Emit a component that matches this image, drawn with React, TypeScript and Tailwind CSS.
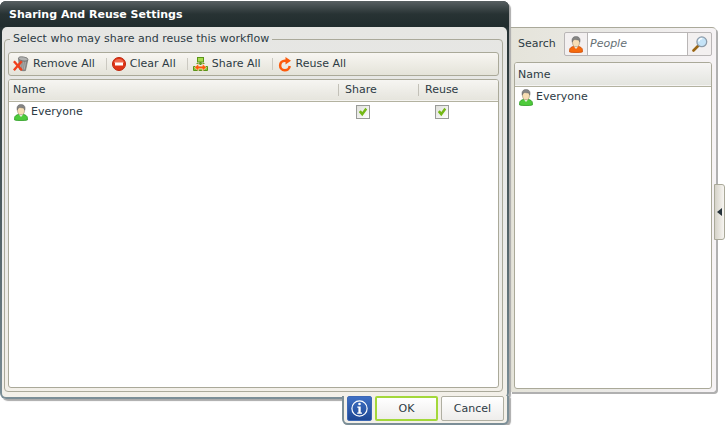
import type { ReactNode } from "react";

type Permission = {
  name: string;
  share: boolean;
  reuse: boolean;
};

const permissions: Permission[] = [
  { name: "Everyone", share: true, reuse: true },
];

const people = ["Everyone"];

function PersonIcon({ color, edge }: { color: string; edge: string }) {
  return (
    <svg width="14" height="17" viewBox="0 0 14 17" className="shrink-0">
      <path
        d="M.6 16V13.6C.8 11.800 2.400 11 5 10.200h4c2.600.8 4.200 1.600 4.400 3.400V16c-2 .7-10.800.7-12.800 0Z"
        fill={color}
        stroke={edge}
        strokeWidth=".8"
      />
      <path d="M4.600 10 7 13l2.400-3Z" fill="#f4f4ee" />
      <ellipse cx="7" cy="6.200" rx="3.500" ry="4.600" fill="#f7deb4" stroke="#9a8a6a" strokeWidth=".6" />
      <path
        d="M3.200 6.200C2.400 2.500 4 .6 7 .6s4.800 1.900 3.800 5.600c-.3-1.200-.8-2-1.600-2.300-1.800.1-3.500-1-5 .3-.4.700-.7 1.200-1 2Z"
        fill="#858585"
        stroke="#666"
        strokeWidth=".5"
      />
    </svg>
  );
}

function TrashIcon() {
  return (
    <svg width="16" height="16" viewBox="0 0 16 16" className="shrink-0">
      <path d="M5.500 2.500 14.800 4 12.500 14.500c-2 .6-4.500 0-6-1Z" fill="#8a8a88" stroke="#666" strokeWidth=".6" />
      <path d="m8 5-.3 8.500M10.300 5.500l-.7 8.500M12.500 5.500l-1.300 8" stroke="#b8b8b6" strokeWidth=".8" />
      <ellipse cx="10.200" cy="2.900" rx="4.800" ry="2" transform="rotate(8 10.200 2.900)" fill="#b2b2b0" stroke="#686868" strokeWidth=".7" />
      <path d="m.9 5.200 8 9M8.700 5.200.9 14.200" stroke="#f0401c" strokeWidth="2.400" />
    </svg>
  );
}

function ClearIcon() {
  return (
    <svg width="14" height="14" viewBox="0 0 14 14" className="shrink-0">
      <circle cx="7" cy="7" r="6.500" fill="#df3417" stroke="#bd260d" />
      <path d="M1.800 6a5.300 5 0 0 1 10.400 0Z" fill="#f06a4e" />
      <rect x="3" y="5.500" width="8" height="3" fill="#fff" />
    </svg>
  );
}

function ShareIcon() {
  return (
    <svg width="15" height="14" viewBox="0 0 15 14" className="shrink-0">
      <path d="M7.500 5v3" stroke="#5b8f16" strokeWidth="2" />
      <rect x="4.500" y=".5" width="6" height="4.500" fill="#a6dc4e" stroke="#5b9418" />
      <path d="M3.500 6.500h8" stroke="#6ca327" />
      <path d="M.5 9.500h14v4H.5Z" fill="#8bc932" stroke="#5b9418" />
      <path
        d="m1.600 10.500 4-3.800v2.500h3.800V6.700l4 3.800-4 3.500v-2.300H5.600V14Z"
        fill="#ff5a0a"
        stroke="#fbe9d6"
        strokeWidth=".6"
      />
    </svg>
  );
}

function ReuseIcon() {
  return (
    <svg width="14" height="15" viewBox="0 0 14 15" className="shrink-0">
      <path d="M8.500 3.700H7A4.800 4.800 0 1 0 11.700 9" fill="none" stroke="#fc5b0c" strokeWidth="2.500" />
      <path d="M7.500 0 13 3.800 7.500 7.600Z" fill="#fc5b0c" />
    </svg>
  );
}

function SearchIcon() {
  return (
    <svg width="16" height="16" viewBox="0 0 16 16">
      <path d="m6.500 9.500-5 5" stroke="#9a6512" strokeWidth="2.600" strokeLinecap="round" />
      <circle cx="9.800" cy="5.800" r="4.900" fill="#c5e3f7" stroke="#8e9caa" strokeWidth="1.300" />
      <path d="M6.800 5.500c.2-2 1.600-3 3.500-2.900" fill="none" stroke="#fff" strokeWidth="1.400" />
    </svg>
  );
}

function InfoIcon() {
  return (
    <svg width="17" height="17" viewBox="0 0 17 17">
      <circle cx="8.500" cy="8.500" r="7.600" fill="none" stroke="#fff" strokeWidth="1.200" />
      <circle cx="8.500" cy="4" r="1.300" fill="#fff" />
      <path d="M6.300 6.500h3.400v6h1.300v1.300H6.200v-1.300h1.200V7.800H6.300Z" fill="#fff" />
    </svg>
  );
}

function ToolbarButton({ icon, children }: { icon: ReactNode; children: ReactNode }) {
  return (
    <button type="button" className="flex items-center gap-1">
      {icon}
      {children}
    </button>
  );
}

function Separator() {
  return <span className="mr-[5px] ml-[11px] h-3 w-px bg-[#cbc9c1]" />;
}

function PermissionCheckbox({ label, checked }: { label: string; checked: boolean }) {
  return (
    <label className="grid size-[14px]">
      <input
        type="checkbox"
        aria-label={label}
        defaultChecked={checked}
        className="peer col-start-1 row-start-1 size-[14px] appearance-none border border-[#999b98] bg-linear-to-br from-[#dedfda] to-white"
      />
      <svg
        viewBox="0 0 14 14"
        className="pointer-events-none invisible col-start-1 row-start-1 size-[14px] peer-checked:visible"
      >
        <path d="m2.800 7 2-1.800 1.500 1.700L9.400 2.800l1.800 1.700-4.900 6.700Z" fill="#74b816" />
      </svg>
    </label>
  );
}

function SharingDialog() {
  return (
    <section className="relative z-10 flex min-w-0 flex-1 flex-col pr-px">
      <div className="rounded-[6px] bg-linear-to-b from-[#202c2d] to-[#7b8e97] px-[2px] pb-[2px] shadow-[2px_2px_1px_#aaa]">
        <h1 className="-mx-[2px] h-[26px] rounded-t-[6px] bg-linear-to-b from-[#586062] via-[#283334] to-[#202c2d] pl-[9px] text-[11px] leading-[27px] font-bold text-white">
          Sharing And Reuse Settings
        </h1>
        <div className="rounded-t-[5px] rounded-b-[4px] bg-linear-to-b from-[#e6e6e3] via-[#e9eae9] to-[#f3f0e9] pt-[5px] pr-1 pb-[5px] pl-[2px]">
          <fieldset className="min-w-0 rounded-[4px] border border-[#aaa99a] px-[3px] pt-[6px] pb-[3px]">
            <legend className="ml-[2px] px-[3px] leading-[14px]">
              Select who may share and reuse this workflow
            </legend>
            <div className="flex h-6 items-center rounded-[3px] border border-[#aaa999] bg-linear-to-b from-[#f8f6f2] to-[#e4e3d9] px-1">
              <ToolbarButton icon={<TrashIcon />}>Remove All</ToolbarButton>
              <Separator />
              <ToolbarButton icon={<ClearIcon />}>Clear All</ToolbarButton>
              <Separator />
              <ToolbarButton icon={<ShareIcon />}>Share All</ToolbarButton>
              <Separator />
              <ToolbarButton icon={<ReuseIcon />}>Reuse All</ToolbarButton>
            </div>
            <div className="mt-[3px] min-h-[309px] overflow-hidden rounded-[3px] border border-[#aaa999] bg-white">
              <table className="w-full table-fixed border-collapse text-left">
                <thead>
                  <tr className="h-[21px] border-b border-[#b3b2a0] bg-linear-to-b from-[#f6f5f2] to-[#e6e5dd]">
                    <th className="pl-1 font-normal">Name</th>
                    <th className="w-20 font-normal">
                      <span className="flex items-center gap-[6px] before:h-3 before:w-px before:bg-[#c3c1b8]">
                        Share
                      </span>
                    </th>
                    <th className="w-20 font-normal">
                      <span className="flex items-center gap-[6px] before:h-3 before:w-px before:bg-[#c3c1b8]">
                        Reuse
                      </span>
                    </th>
                  </tr>
                </thead>
                <tbody>
                  {permissions.map((row) => (
                    <tr key={row.name} className="h-[22px]">
                      <td className="pl-[5px]">
                        <span className="flex items-center gap-[3px]">
                          <PersonIcon color="#4ecb3b" edge="#2d9c24" />
                          {row.name}
                        </span>
                      </td>
                      <td className="pl-[18px]">
                        <PermissionCheckbox label={`Share with ${row.name}`} checked={row.share} />
                      </td>
                      <td className="pl-[17px]">
                        <PermissionCheckbox label={`Reuse by ${row.name}`} checked={row.reuse} />
                      </td>
                    </tr>
                  ))}
                </tbody>
              </table>
            </div>
          </fieldset>
        </div>
      </div>
      <footer className="relative -mt-[3px] flex gap-[3px] self-end rounded-b-[6px] border-x-2 border-b-2 border-[#7b8e97] bg-[#f3f0e9] px-[3px] pb-[2px] shadow-[2px_2px_1px_#aaa]">
        <button
          type="button"
          aria-label="Information"
          className="grid size-[25px] place-items-center rounded-[2px] border border-[#3d68b5] bg-linear-to-b from-[#3f70c4] to-[#1d4795]"
        >
          <InfoIcon />
        </button>
        <button
          type="button"
          className="h-[25px] w-[63px] rounded-[2px] border-2 border-[#a3d83a] bg-linear-to-b from-white to-[#eeedeb]"
        >
          OK
        </button>
        <button
          type="button"
          className="h-[25px] w-[63px] rounded-[2px] border border-[#b0afa2] bg-linear-to-b from-white to-[#eeedeb]"
        >
          Cancel
        </button>
      </footer>
    </section>
  );
}

function PeoplePanel() {
  return (
    <aside className="relative mt-[26px] w-[206px] shrink-0 rounded-r-[4px] border-t border-[#aaa99a] bg-linear-to-r from-[#e5e4da] via-[#eae9e6] to-[#f6f3f5] pt-1 pr-[4px] pb-[3px] pl-1 shadow-[2px_2px_0_#b0b0b0]">
      <div className="flex items-center justify-between pl-1">
        <label htmlFor="people-search">Search</label>
        <div className="flex h-6 w-[148px] rounded-[2px] border border-[#b9b6b6] bg-[#f3f0f0]">
          <span className="grid w-[22px] shrink-0 place-items-center">
            <PersonIcon color="#f66a0c" edge="#ce4d05" />
          </span>
          <input
            id="people-search"
            type="text"
            placeholder="People"
            className="min-w-0 flex-1 border-x border-[#b9b6b6] bg-white px-[2px] placeholder:text-[#667075] placeholder:italic"
          />
          <button type="button" aria-label="Search people" className="grid w-[23px] shrink-0 place-items-center">
            <SearchIcon />
          </button>
        </div>
      </div>
      <div className="mt-[6px] min-h-[327px] overflow-hidden rounded-[3px] border border-[#aaa999] bg-white">
        <table className="w-full border-collapse text-left">
          <thead>
            <tr className="h-[23px] border-b border-[#b3b2a0] bg-linear-to-b from-[#f6f5f4] to-[#e4e5e0]">
              <th className="pt-[2px] pl-[3px] font-normal">Name</th>
            </tr>
          </thead>
          <tbody>
            {people.map((name) => (
              <tr key={name} className="h-[22px]">
                <td className="pl-1">
                  <span className="flex items-center gap-[3px]">
                    <PersonIcon color="#4ecb3b" edge="#2d9c24" />
                    {name}
                  </span>
                </td>
              </tr>
            ))}
          </tbody>
        </table>
      </div>
      <button
        type="button"
        aria-label="Collapse panel"
        className="absolute top-[156px] -right-[9px] grid h-14 w-[11px] place-items-center rounded-r-[3px] border border-[#aaa999] bg-linear-to-r from-[#d6d3c9] to-[#f7f5f1]"
      >
        <svg width="5" height="8" viewBox="0 0 5 8">
          <path d="M5 0v8L0 4Z" fill="#26323a" />
        </svg>
      </button>
    </aside>
  );
}

export default function App() {
  return (
    <main className="flex items-start bg-white pt-px pr-[10px] font-['DejaVu_Sans',Verdana,sans-serif] text-[11px] leading-[14px] text-[#2d3b44]">
      <SharingDialog />
      <PeoplePanel />
    </main>
  );
}
